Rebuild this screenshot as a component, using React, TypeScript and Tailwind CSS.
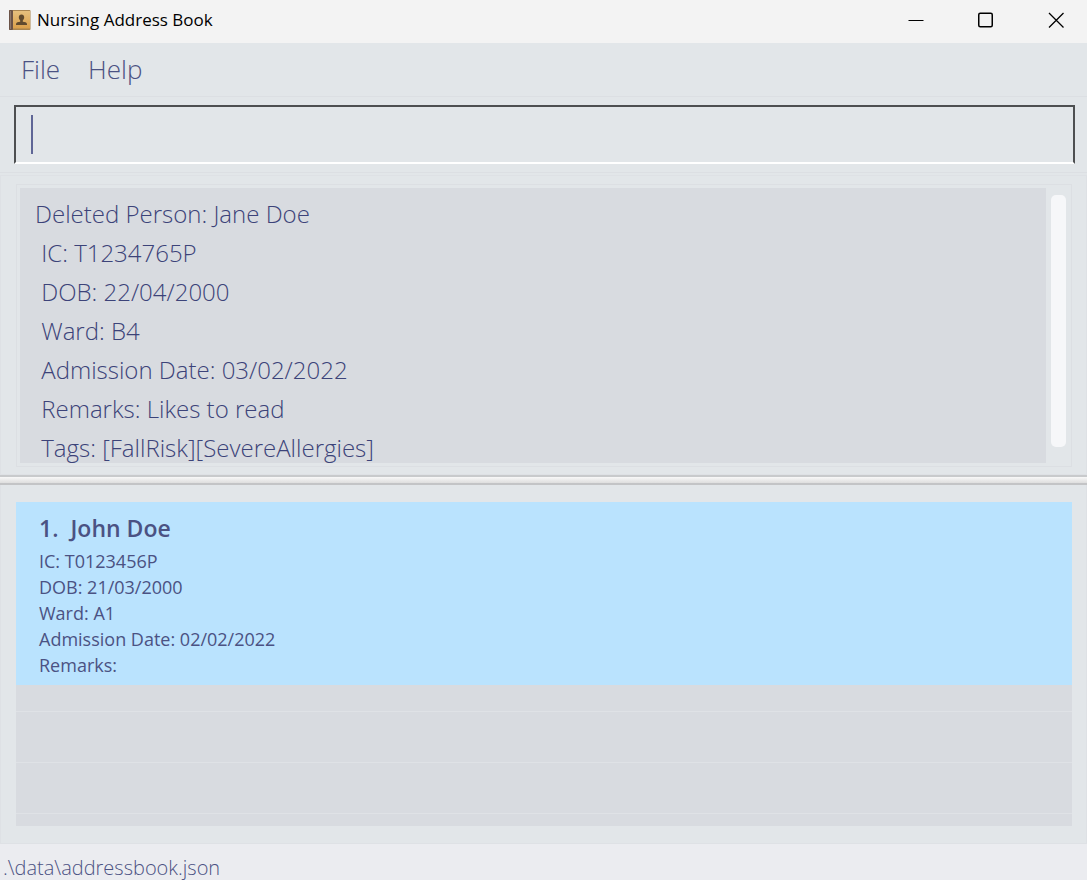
import React, { useState } from "react";

const feedback = [
  "Deleted Person: Jane Doe",
  " IC: T1234765P",
  " DOB: 22/04/2000",
  " Ward: B4",
  " Admission Date: 03/02/2022",
  " Remarks: Likes to read",
  " Tags: [FallRisk][SevereAllergies]",
].join("\n");

const patients = [
  {
    name: "John Doe",
    details: ["IC: T0123456P", "DOB: 21/03/2000", "Ward: A1", "Admission Date: 02/02/2022", "Remarks:"],
  },
];

function BookIcon() {
  return (
    <svg width="24" height="24" viewBox="0 0 24 24" aria-hidden="true">
      <defs>
        <linearGradient id="cover" x1="0" y1="0" x2="0" y2="1">
          <stop offset="0" stopColor="#e6c07e" />
          <stop offset="1" stopColor="#dba04a" />
        </linearGradient>
      </defs>
      <rect x="1" y="2" width="21.500" height="20" rx="1" fill="#a98550" />
      <rect x="5" y="3" width="17" height="17.500" fill="url(#cover)" />
      <rect x="1" y="2" width="4" height="20" rx="1" fill="#6b5347" />
      <path d="M2.500 3v18" stroke="#8d776a" />
      <path
        d="M13.500 6.500c1.700 0 2.700 1.200 2.700 2.800 0 1.300-.6 2.400-1.400 3.100v1.300c1.900.3 4.200.6 4.200 2.300V17H8v-1c0-1.700 2.300-2 4.200-2.300v-1.300c-.8-.7-1.400-1.800-1.400-3.100 0-1.600 1-2.800 2.700-2.800z"
        fill="#604a2e"
      />
    </svg>
  );
}

function TitleBar() {
  return (
    <header className="flex h-[43px] items-center justify-between bg-[#f3f3f3] pb-[3px] pl-2 text-black">
      <div className="flex items-center gap-[5px]">
        <BookIcon />
        <h1 className="text-[17px] leading-6">Nursing Address Book</h1>
      </div>
      <div className="flex">
        <button aria-label="Minimize" className="flex h-10 w-[62px] items-center justify-center">
          <svg width="16" height="16" viewBox="0 0 16 16" fill="none" stroke="currentColor">
            <path d="M0.500 8.500h15" />
          </svg>
        </button>
        <button aria-label="Maximize" className="flex h-10 w-[78px] items-center justify-center">
          <svg width="16" height="16" viewBox="0 0 16 16" fill="none" stroke="currentColor" strokeWidth="1.500">
            <rect x="0.750" y="1.250" width="13.500" height="13.500" rx="1.500" />
          </svg>
        </button>
        <button aria-label="Close" className="flex h-10 w-[62px] items-center justify-center">
          <svg width="16" height="16" viewBox="0 0 16 16" fill="none" stroke="currentColor" strokeWidth="1.300">
            <path d="M1 1l14.500 14.500M15.500 1l-14.500 14.500" />
          </svg>
        </button>
      </div>
    </header>
  );
}

export default function App() {
  const [command, setCommand] = useState("");

  return (
    <div className="flex min-h-screen flex-col bg-[#e2e6e9] font-['Open_Sans',sans-serif] text-[#4b5283]">
      <TitleBar />
      <nav className="flex h-[54px] items-center gap-7 border-b border-[#dcdfe3] px-[21px] pb-0.5 text-[26px] leading-8 font-light">
        <button>File</button>
        <button>Help</button>
      </nav>

      <div className="border-b border-[#dcdfe3] pt-2 pr-3 pb-2 pl-3.5">
        <div className="relative">
          <input
            aria-label="Command"
            value={command}
            onChange={(e) => setCommand(e.target.value)}
            className="block h-[59px] w-full border-2 border-t-[#4d4f51] border-r-[#4d4f51] border-b-white border-l-[#4d4f51] bg-transparent px-4 text-[25px] font-light caret-transparent outline-none"
          />
          {command === "" && (
            <span className="pointer-events-none absolute top-2.5 left-[17px] h-[39px] w-0.5 bg-[#5f6696]" />
          )}
        </div>
      </div>

      <section className="mt-0.5 border border-[#dee1e5] pt-2 pr-3.5 pb-[7px] pl-[15px]">
        <div className="flex border border-[#dcdfe3] p-[3px] pr-[5px]">
          <textarea
            readOnly
            aria-label="Result"
            value={feedback}
            className="block h-[275px] min-w-0 flex-1 resize-none overflow-hidden bg-[#d8dbe0] px-[15px] pt-1.5 text-[24px] leading-[39px] font-light text-[#3c4379] outline-none"
          />
          <div className="ml-[5px] pt-[7px]">
            <div className="h-[252px] w-[15px] rounded-[5px] bg-[#f6f7f9]" />
          </div>
        </div>
      </section>

      <div
        role="separator"
        className="h-[10px] border-y-2 border-t-[#c8cacc] border-b-[#c3c4c6] bg-linear-to-b from-[#f8f8f8] to-[#dedede]"
      />

      <section className="flex flex-1 flex-col border-x border-b border-[#dee1e5] pt-[17px] pr-3.5 pb-[17px] pl-[15px]">
        <ol className="flex flex-1 flex-col bg-[#d8dbe0]">
          {patients.map((p, i) => (
            <li key={p.name} className="h-[183px] bg-[#bae3fe] px-[23px] pt-2.5">
              <h2 className="mb-1 flex gap-3 text-[23px] leading-8 font-semibold">
                <span>{i + 1}.</span>
                <span>{p.name}</span>
              </h2>
              {p.details.map((line) => (
                <p key={line} className="text-[18px] leading-[26px]">
                  {line}
                </p>
              ))}
            </li>
          ))}
          <li aria-hidden="true" className="h-[27px] border-b border-[#dfe2e6]" />
          <li aria-hidden="true" className="h-[51px] border-b border-[#dfe2e6]" />
          <li aria-hidden="true" className="h-[51px] border-b border-[#dfe2e6]" />
        </ol>
      </section>

      <footer className="flex h-9 items-end bg-[#ebecf0] px-[3px] text-[20px] leading-6 font-light">
        <span>.\data\addressbook.json</span>
      </footer>
    </div>
  );
}
